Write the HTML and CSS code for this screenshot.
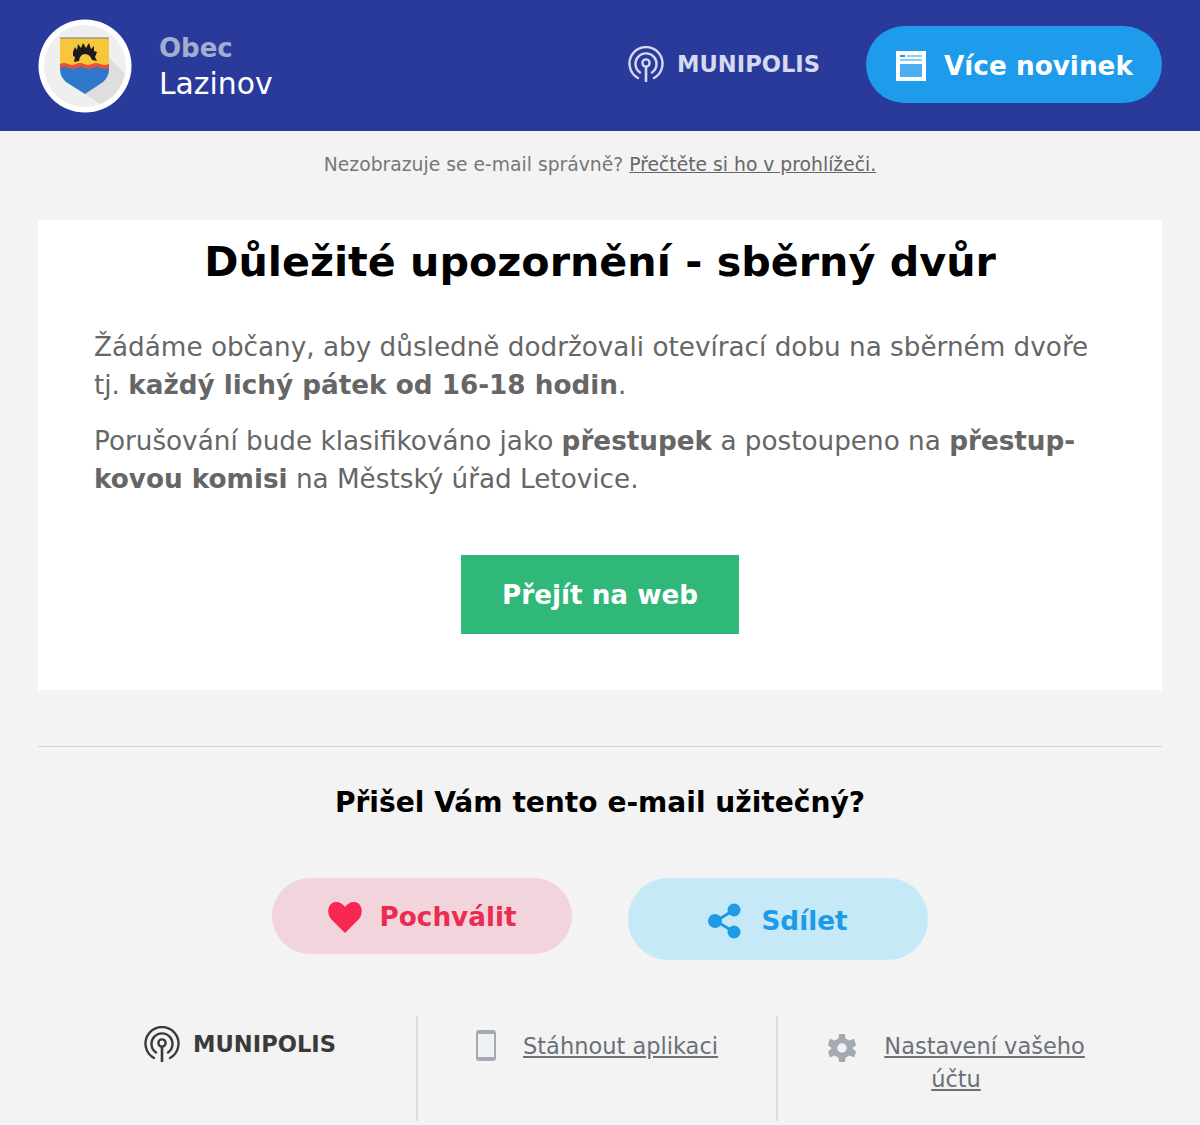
FILE: index.html
```html
<!DOCTYPE html>
<html lang="cs">
<head>
<title>Obec Lazinov</title>
<meta charset="UTF-8">
<link rel="stylesheet" href="styles.css">
</head>
<body>

<div class="header">
  <div class="crest">
    <svg width="94" height="94" viewBox="0 0 94 94">
      <circle cx="47" cy="47" r="46.5" fill="#fff"/>
      <circle cx="47" cy="47" r="41" fill="#efefef"/>
      <path d="M71 38 L87 55 A41 41 0 0 1 62 85 L47 75 Z" fill="#dedede"/>
      <path d="M22 19 H71 V50 Q71 58 65 63 L47 75 L28 63 Q22 58 22 50 Z" fill="#2f77c9"/>
      <path d="M22 19 H71 V47 H22 Z" fill="#f6c73c"/>
      <path d="M22 19 H71" stroke="#777" stroke-width="1"/>
      <path d="M22 45 q4 -2 8 0 t8 0 t8 0 t8 0 t8 0 t9 0 v4 q-4 2 -8 0 t-8 0 t-8 0 t-8 0 t-8 0 t-9 0 Z" fill="#e8503a"/>
      <path d="M35 33 L37 28 L39 31 L40 25 L43 29 L45 24 L48 29 L51 24 L53 30 L56 27 L56 32 L59 33 L57 38 L59 42 L54 41 Q52 35 47 35 Q42 35 41 42 L36 43 L37 38 L35 37 Z" fill="#1b1b1b"/>
    </svg>
  </div>
  <div class="town">
    <div class="town-label">Obec</div>
    <div class="town-name">Lazinov</div>
  </div>
  <div class="brand brand-light">
    <svg class="brand-icon" viewBox="0 0 36 36"><use href="#signal"/></svg>
    <span>MUNIPOLIS</span>
  </div>
  <a class="more" href="#">
    <svg width="30" height="30" viewBox="0 0 30 30">
      <rect width="30" height="30" fill="#fff"/>
      <rect x="4" y="13" width="22" height="13" fill="#4aaeef"/>
      <rect x="4" y="4" width="5" height="2" fill="#1e9bea"/>
      <rect x="11" y="4" width="15" height="2" fill="#8ccdf5"/>
      <rect x="4" y="8" width="22" height="2" fill="#8ccdf5"/>
    </svg>
    Více novinek
  </a>
</div>

<svg class="defs" width="0" height="0">
  <symbol id="signal" viewBox="0 0 36 36">
    <g fill="none" stroke="currentColor" stroke-linecap="round">
      <path stroke-width="2.4" d="M10 32 A16.5 16.5 0 1 1 26 32"/>
      <path stroke-width="2.4" d="M12 26.5 A10.5 10.5 0 1 1 24 26.5"/>
      <circle stroke-width="2.4" cx="18" cy="17" r="3.6"/>
      <path stroke-width="2.6" d="M18 21 V35"/>
    </g>
  </symbol>
</svg>

<p class="browser-note">Nezobrazuje se e-mail správně? <a href="#">Přečtěte si ho v prohlížeči.</a></p>

<div class="card">
  <h1>Důležité upozornění - sběrný dvůr</h1>
  <p>Žádáme občany, aby důsledně dodržovali otevírací dobu na sběrném dvoře<br>tj. <b>každý lichý pátek od 16-18 hodin</b>.</p>
  <p>Porušování bude klasifikováno jako <b>přestupek</b> a postoupeno na <b>přestup-<br>kovou komisi</b> na Městský úřad Letovice.</p>
  <div class="card-action"><a class="web-btn" href="#">Přejít na web</a></div>
</div>

<div class="feedback">
  <h2>Přišel Vám tento e-mail užitečný?</h2>
  <div class="feedback-btns">
    <a class="pill pill-like" href="#">
      <svg width="34" height="32" viewBox="0 0 34 32"><path d="M17 32 L3 18 C-2 12 0 1 8 1 C12 1 15 3 17 6 C19 3 22 1 26 1 C34 1 36 12 31 18 Z" fill="#f7274f"/></svg>
      Pochválit
    </a>
    <a class="pill pill-share" href="#">
      <svg width="34" height="36" viewBox="0 0 34 36">
        <path d="M26 7 L8 18 L26 29" fill="none" stroke="#1e9be6" stroke-width="3"/>
        <circle cx="26" cy="7" r="6.5" fill="#1e9be6"/>
        <circle cx="7" cy="18" r="7" fill="#1e9be6"/>
        <circle cx="26" cy="29" r="6.5" fill="#1e9be6"/>
      </svg>
      Sdílet
    </a>
  </div>
</div>

<div class="footer">
  <div class="footer-col footer-brand">
    <div class="brand brand-dark">
      <svg class="brand-icon" viewBox="0 0 36 36"><use href="#signal"/></svg>
      <span>MUNIPOLIS</span>
    </div>
  </div>
  <div class="footer-col footer-app">
    <svg width="20" height="31" viewBox="0 0 20 31">
      <rect x="1" y="1" width="18" height="29" rx="2" fill="#f0f1f3" stroke="#a4a9b2" stroke-width="2"/>
      <rect x="1" y="1" width="18" height="3" fill="#a4a9b2"/>
      <rect x="1" y="27" width="18" height="3" fill="#a4a9b2"/>
    </svg>
    <a href="#">Stáhnout aplikaci</a>
  </div>
  <div class="footer-settings">
    <svg width="30" height="30" viewBox="0 0 32 32">
      <path d="M16 16 m-5 0 a5 5 0 1 0 10 0 a5 5 0 1 0 -10 0 Z M13 1 H19 L20 6 L24 8 L29 6 L31 13 L27 16 L31 20 L29 26 L24 24 L20 26 L19 31 H13 L12 26 L8 24 L3 26 L1 20 L5 16 L1 13 L3 6 L8 8 L12 6 Z" fill="#a4a9b2" fill-rule="evenodd"/>
    </svg>
    <a href="#">Nastavení vašeho účtu</a>
  </div>
</div>

</body>
</html>
```

FILE: styles.css
```css
* {
  box-sizing: border-box;
}

body {
  font-family: "DejaVu Sans", sans-serif;
  margin: 0;
  background: #f3f3f3;
  color: #666;
  overflow: hidden;
}

.defs {
  position: absolute;
}

/* Header */
.header {
  display: flex;
  align-items: center;
  height: 131px;
  padding: 0 38px;
  background: #2a3a9a;
}

.crest {
  width: 94px;
  height: 94px;
}

.town {
  margin-left: 27px;
  padding-top: 2px;
  flex: 1;
}

.town-label {
  font-size: 26px;
  font-weight: bold;
  line-height: 34px;
  color: #a3adcf;
}

.town-name {
  font-size: 29.8px;
  line-height: 38px;
  color: #fff;
}

.brand {
  display: flex;
  align-items: center;
  font-weight: 700;
  font-size: 22.6px;
}

.brand-icon {
  width: 36px;
  height: 36px;
  margin-right: 13px;
}

.brand-light {
  color: #d5daf0;
  margin-right: 46px;
  margin-bottom: 4px;
}

.brand-dark {
  color: #3a3a3a;
}

.more {
  display: flex;
  align-items: center;
  gap: 18px;
  width: 296px;
  height: 77px;
  padding: 3px 0 0 30px;
  margin-bottom: 2px;
  border-radius: 39px;
  background: #1e9bea;
  color: #fff;
  font-size: 26.3px;
  font-weight: bold;
  text-decoration: none;
}

/* Browser note */
.browser-note {
  margin: 0;
  padding-top: 22px;
  height: 89px;
  text-align: center;
  font-size: 18.75px;
  line-height: 24px;
  color: #777;
}

.browser-note a {
  color: #666;
}

/* Main card */
.card {
  margin: 0 38px;
  height: 470px;
  padding: 17px 56px 0;
  background: #fff;
}

.card h1 {
  margin: 0 0 42px;
  text-align: center;
  font-size: 41.25px;
  line-height: 50px;
  color: #000;
}

.card p {
  margin: 0 0 19px;
  font-size: 26.25px;
  line-height: 37.5px;
}

.card-action {
  display: flex;
  justify-content: center;
  margin-top: 57px;
}

.web-btn {
  display: flex;
  align-items: center;
  justify-content: center;
  width: 278px;
  height: 79px;
  background: #30b878;
  color: #fff;
  font-size: 26.25px;
  font-weight: bold;
  text-decoration: none;
}

/* Feedback */
.feedback {
  margin: 56px 38px 0;
  border-top: 1px solid #d4d5d7;
}

.feedback h2 {
  margin: 37px 0 0;
  text-align: center;
  font-size: 28.1px;
  line-height: 38px;
  color: #000;
}

.feedback-btns {
  display: flex;
  justify-content: center;
  align-items: flex-start;
  gap: 56px;
  margin-top: 56px;
}

.pill {
  display: flex;
  align-items: center;
  justify-content: center;
  gap: 18px;
  width: 300px;
  border-radius: 40px;
  font-size: 26.25px;
  font-weight: bold;
  text-decoration: none;
}

.pill-like {
  height: 76px;
  padding-top: 2px;
  background: #f2d5dc;
  color: #e92c50;
}

.pill-share {
  gap: 19px;
  height: 82px;
  padding-top: 3px;
  background: #c6e9f8;
  color: #1e9be6;
}

/* Footer */
.footer {
  display: flex;
  margin: 56px 38px 0;
  height: 105px;
}

.footer-col {
  display: flex;
  align-items: flex-start;
  font-size: 22.5px;
  line-height: 32px;
}

.footer-col a,
.footer-settings a {
  color: #6b7078;
}

.footer-brand {
  width: 380px;
  justify-content: center;
  padding-top: 10px;
  padding-left: 26px;
  border-right: 2px solid #dcdddf;
}

.footer-app {
  width: 360px;
  padding: 14px 0 0 58px;
  gap: 27px;
  border-right: 2px solid #dcdddf;
}

.footer-settings {
  width: 276px;
  margin-left: 40px;
  padding-top: 14px;
  text-align: center;
  font-size: 22.5px;
  line-height: 32px;
}

.footer-settings svg {
  vertical-align: middle;
  margin-right: 20px;
}
```
